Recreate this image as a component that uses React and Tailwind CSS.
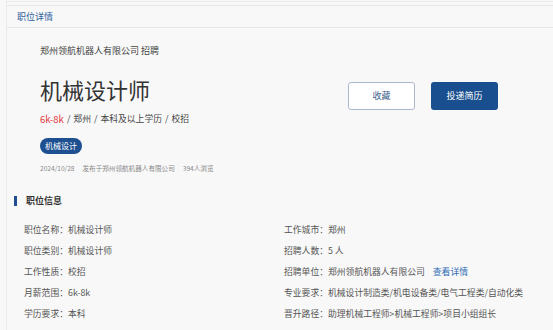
import React from "react";

const font = { fontFamily: '"Noto Sans CJK SC", "Noto Sans", sans-serif' };

const leftRows = [
  ["职位名称", "机械设计师"],
  ["职位类别", "机械设计师"],
  ["工作性质", "校招"],
  ["月薪范围", "6k-8k"],
  ["学历要求", "本科"],
];

const rightRows = [
  ["工作城市", "郑州"],
  ["招聘人数", "5 人"],
  ["招聘单位", "郑州领航机器人有限公司", true],
  ["专业要求", "机械设计制造类/机电设备类/电气工程类/自动化类"],
  ["晋升路径", "助理机械工程师>机械工程师>项目小组组长"],
];

function InfoRow({ label, value, link }) {
  return (
    <div className="h-[21px] flex items-center text-[8.8px] text-[#555] whitespace-nowrap">
      <span>{label}：</span>
      <span>{value}</span>
      {link && <span className="ml-[8px] text-[#2d6bb5]">查看详情</span>}
    </div>
  );
}

const Sep = () => <span className="px-[3px]">/</span>;

export default function App() {
  return (
    <div className="w-[553px] h-[330px] bg-[#f8f8f8] overflow-hidden" style={font}>
      <div className="h-[330px] ml-[6px] border-l border-t border-[#ebebeb] mt-[1px]">
        {/* header */}
        <div className="h-[23px] mt-[3px] border-y border-[#e8e8e8] flex items-center pl-[10px] text-[9px] text-[#2f5f9f]">
          职位详情
        </div>

        {/* job summary */}
        <div className="pl-[33px] pr-[55px] pt-[16px] flex justify-between">
          <div>
            <div className="text-[9px] text-[#444] h-[14px] leading-[14px]">郑州领航机器人有限公司 招聘</div>
            <div className="text-[22px] text-[#333] leading-[30px] mt-[16px]">机械设计师</div>
            <div className="flex items-center text-[8.8px] text-[#444] mt-[7px] h-[16px] whitespace-nowrap">
              <span className="text-[#e0393e] text-[9.5px]">6k-8k</span>
              <Sep />
              <span>郑州</span>
              <Sep />
              <span>本科及以上学历</span>
              <Sep />
              <span>校招</span>
            </div>
            <div className="mt-[11px] inline-flex h-[16px] px-[5px] items-center rounded-full bg-[#1d4f91] text-white text-[8px]">
              机械设计
            </div>
            <div className="mt-[8px] text-[6.6px] text-[#888] flex gap-[8px] leading-[12px] whitespace-nowrap">
              <span>2024/10/28</span>
              <span>发布于郑州领航机器人有限公司</span>
              <span>394人浏览</span>
            </div>
          </div>
          <div className="flex gap-[16px] mt-[38px]">
            <div className="w-[67px] h-[28px] border border-[#a9b8cc] rounded-[3px] bg-white flex items-center justify-center text-[9px] text-[#3c5f8c]">
              收藏
            </div>
            <div className="w-[67px] h-[28px] rounded-[3px] bg-[#1a4f8f] flex items-center justify-center text-[9px] text-white">
              投递简历
            </div>
          </div>
        </div>

        {/* section title */}
        <div className="mt-[22px] flex items-center pl-[7px] gap-[9px]">
          <div className="w-[3px] h-[10px] bg-[#1d4f91]"></div>
          <div className="text-[9px] font-bold text-[#333] leading-[10px]">职位信息</div>
        </div>

        {/* info grid */}
        <div className="mt-[13px] pl-[17px] grid grid-cols-[260px_1fr]">
          <div>
            {leftRows.map(([l, v]) => (
              <InfoRow key={l} label={l} value={v} />
            ))}
          </div>
          <div>
            {rightRows.map(([l, v, link]) => (
              <InfoRow key={l} label={l} value={v} link={link} />
            ))}
          </div>
        </div>
      </div>
    </div>
  );
}
